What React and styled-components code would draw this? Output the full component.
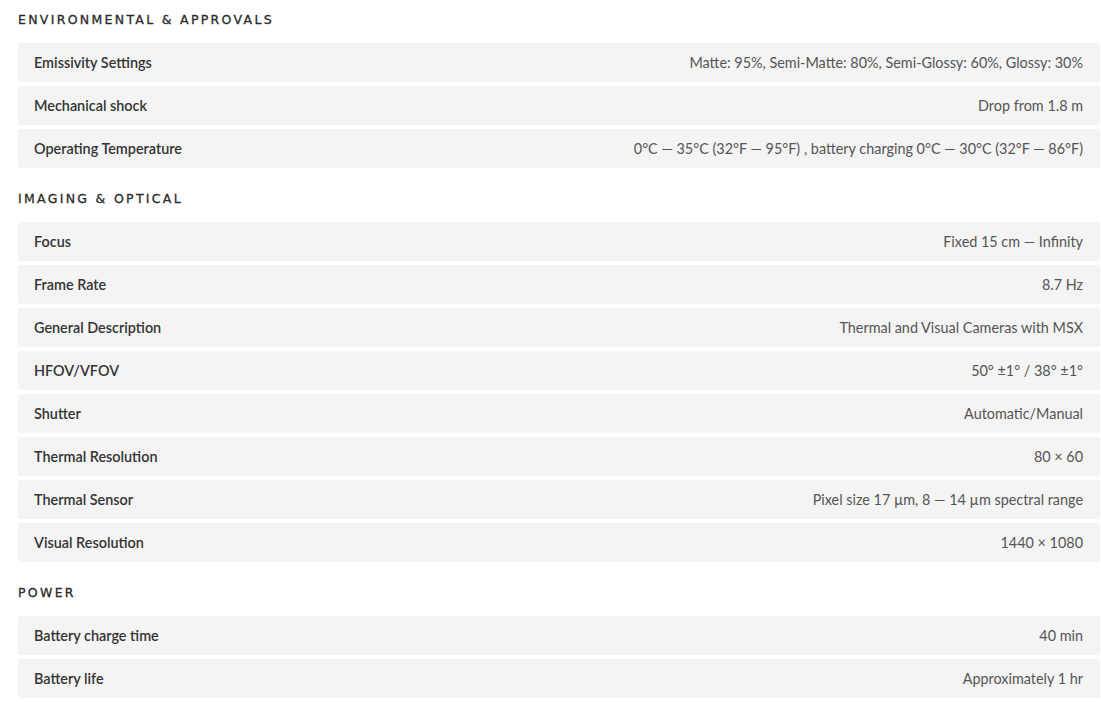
import React from "react";
import styled, { createGlobalStyle } from "styled-components";

const Global = createGlobalStyle`
  html, body { margin: 0; padding: 0; background: #ffffff; }
  body { font-family: Lato, "Noto Sans", sans-serif; }
`;

const Page = styled.div`
  padding: 10px 1px 0 18px;
  display: flex;
  flex-direction: column;
  gap: 21px;
`;

const Section = styled.section`
  display: flex;
  flex-direction: column;
`;

const Heading = styled.h3`
  margin: 0 0 13px;
  height: 20px;
  line-height: 20px;
  font-family: "DejaVu Sans", sans-serif;
  font-size: 12.5px;
  font-weight: 400;
  letter-spacing: 2.3px;
  text-transform: uppercase;
  color: #2a2a2a;
  -webkit-text-stroke: 0.3px #2a2a2a;
`;

const Rows = styled.div`
  display: flex;
  flex-direction: column;
  gap: 4px;
`;

const Row = styled.div`
  box-sizing: border-box;
  height: 39px;
  display: flex;
  align-items: center;
  justify-content: space-between;
  padding: 0 17px 1px 16px;
  background: #f4f4f4;
  border-radius: 2px;
  font-size: 14.4px;
`;

const Label = styled.span`
  font-weight: 600;
  color: #333333;
`;

const Value = styled.span`
  font-weight: 400;
  color: #555555;
  text-align: right;
`;

const data = [
  {
    title: "Environmental & Approvals",
    rows: [
      ["Emissivity Settings", "Matte: 95%, Semi-Matte: 80%, Semi-Glossy: 60%, Glossy: 30%"],
      ["Mechanical shock", "Drop from 1.8 m"],
      ["Operating Temperature", "0°C — 35°C (32°F — 95°F) , battery charging 0°C — 30°C (32°F — 86°F)"],
    ],
  },
  {
    title: "Imaging & Optical",
    rows: [
      ["Focus", "Fixed 15 cm — Infinity"],
      ["Frame Rate", "8.7 Hz"],
      ["General Description", "Thermal and Visual Cameras with MSX"],
      ["HFOV/VFOV", "50° ±1° / 38° ±1°"],
      ["Shutter", "Automatic/Manual"],
      ["Thermal Resolution", "80 × 60"],
      ["Thermal Sensor", "Pixel size 17 µm, 8 — 14 µm spectral range"],
      ["Visual Resolution", "1440 × 1080"],
    ],
  },
  {
    title: "Power",
    rows: [
      ["Battery charge time", "40 min"],
      ["Battery life", "Approximately 1 hr"],
    ],
  },
];

export default function App() {
  return (
    <>
      <Global />
      <Page>
        {data.map((s) => (
          <Section key={s.title}>
            <Heading>{s.title}</Heading>
            <Rows>
              {s.rows.map(([k, v]) => (
                <Row key={k}>
                  <Label>{k}</Label>
                  <Value>{v}</Value>
                </Row>
              ))}
            </Rows>
          </Section>
        ))}
      </Page>
    </>
  );
}
